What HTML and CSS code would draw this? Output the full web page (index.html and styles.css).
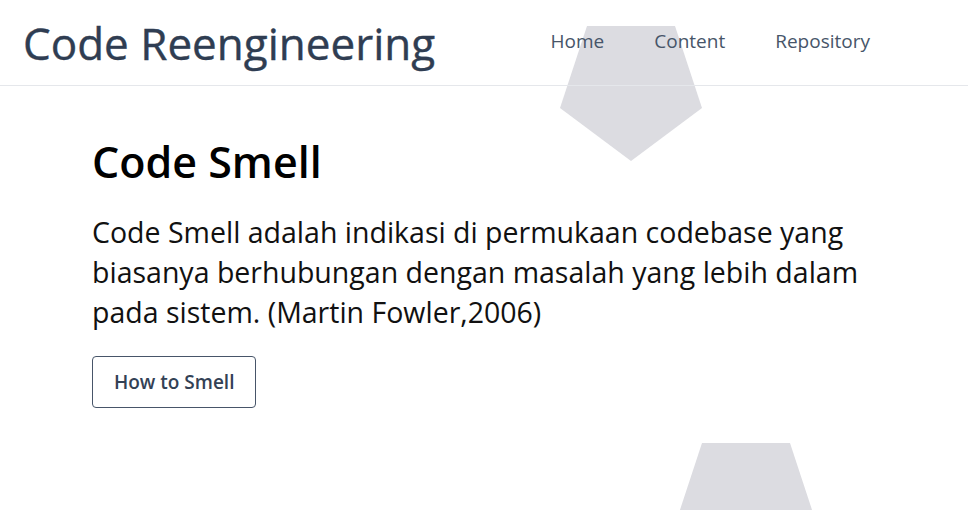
FILE: index.html
```html
<!DOCTYPE html>
<html>
<head>
<meta charset="utf-8">
<link rel="stylesheet" href="styles.css">
</head>
<body>
<div class="page">
  <svg class="shape shape-top" width="142" height="136" viewBox="0 0 142 136"><polygon points="27,0 115,0 142,82 71,135 0,82" fill="#dcdce1"/></svg>
  <svg class="shape shape-bottom" width="142" height="136" viewBox="0 0 142 136"><polygon points="27,0 115,0 142,82 71,135 0,82" fill="#dcdce1"/></svg>
  <header class="header">
    <div class="brand">Code Reengineering</div>
    <nav class="nav">
      <a class="nav-link" href="#">Home</a>
      <a class="nav-link" href="#">Content</a>
      <a class="nav-link" href="#">Repository</a>
    </nav>
  </header>
  <main class="hero">
    <h1 class="hero-title">Code Smell</h1>
    <p class="hero-text">Code Smell adalah indikasi di permukaan codebase yang biasanya berhubungan dengan masalah yang lebih dalam pada sistem. (Martin Fowler,2006)</p>
    <a class="btn" href="#">How to Smell</a>
  </main>
</div>
</body>
</html>
```
FILE: styles.css
```css
* { box-sizing: border-box; }
html, body { margin: 0; padding: 0; background: #fff; }
body { font-family: "Open Sans", "Noto Sans", sans-serif; }
.page { position: relative; width: 968px; height: 510px; overflow: hidden; }
.shape { position: absolute; z-index: 0; }
.shape-top { left: 560px; top: 26px; }
.shape-bottom { left: 675px; top: 443px; }
.header {
  position: relative; z-index: 1;
  height: 86px;
  border-bottom: 1px solid #e5e7eb;
  display: flex; align-items: center;
  padding: 0 98px 0 23px;
}
.brand { font-size: 44px; font-weight: 400; color: #2f3d52; line-height: 1; -webkit-text-stroke: 0.4px #2f3d52; }
.nav { margin-left: auto; display: flex; gap: 50px; padding-bottom: 4px; }
.nav-link { font-size: 19px; color: #475569; text-decoration: none; }
.hero { position: relative; z-index: 1; padding: 48px 0 0 92px; }
.hero-title { margin: 0; font-size: 43px; font-weight: 600; color: #000; line-height: 56px; }
.hero-text { margin: 22px 0 0; font-size: 28.5px; line-height: 40px; color: #111; max-width: 800px; }
.btn {
  display: inline-block; margin-top: 24px;
  height: 52px; padding: 0 21px;
  border: 1px solid #475569; border-radius: 4px;
  font-size: 19px; font-weight: 600; line-height: 50px;
  color: #334155; text-decoration: none;
}
```
